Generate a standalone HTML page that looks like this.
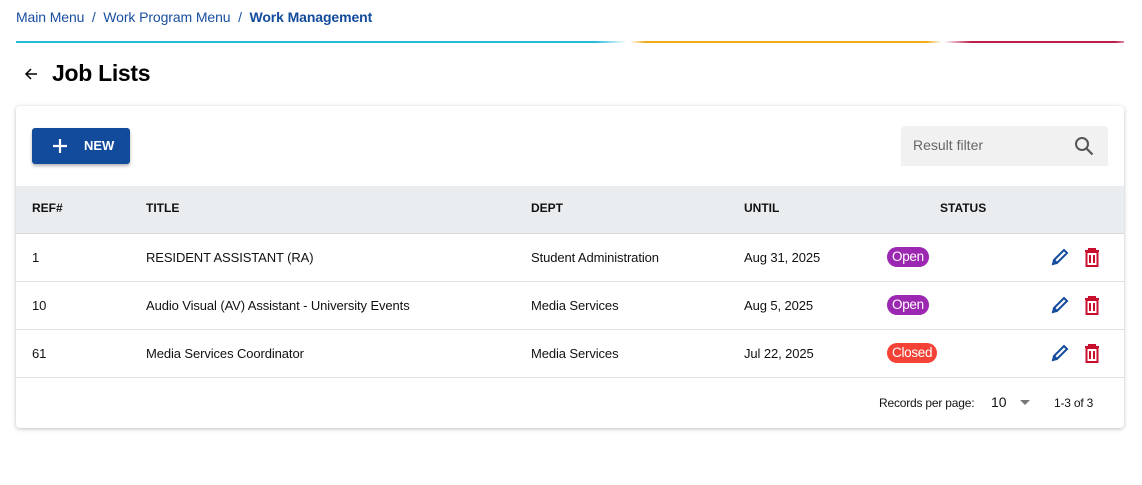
<!DOCTYPE html>
<html><head><style>
*{box-sizing:border-box;margin:0;padding:0}
body{width:1142px;height:485px;background:#fff;font-family:"Liberation Sans",Arial,sans-serif;color:#111;position:relative;overflow:hidden}
.a{position:absolute}
.bc{left:16px;top:9px;font-size:14px;color:#1a4fa0;letter-spacing:-0.1px}
.bc b{color:#124a9c}
.line{top:41px;height:2px}
h1{position:absolute;left:52px;top:60px;font-size:23px;font-weight:bold;color:#000;letter-spacing:-0.3px}
.card{left:16px;top:106px;width:1108px;height:322px;background:#fff;border-radius:4px;box-shadow:0 1px 4px rgba(0,0,0,.25)}
.btn{left:16px;top:22px;width:98px;height:36px;background:#124a9c;border-radius:3px;box-shadow:0 2px 3px rgba(0,0,0,.3);color:#fff;font-size:13px;font-weight:bold}
.search{left:885px;top:20px;width:207px;height:40px;background:#f1f1f1;border-radius:4px 4px 0 0;font-size:14px;color:#666}
.thead{left:0;top:80px;width:1108px;height:48px;background:#eaedf0;border-bottom:1px solid #d8d8d8;font-size:12px;font-weight:bold}
.row{left:0;width:1108px;height:48px;border-bottom:1px solid #e0e0e0;font-size:13px;letter-spacing:-0.1px}
.c{position:absolute;top:50%;transform:translateY(-55%)}
.badge{color:#fff;font-size:13.5px;padding:1px 5px;border-radius:10px;line-height:18px;letter-spacing:-0.3px}
.foot{font-size:12px;letter-spacing:-0.2px}
</style></head><body>
<div class="a bc">Main Menu &nbsp;/&nbsp; Work Program Menu &nbsp;/&nbsp; <b>Work Management</b></div>
<div class="a line" style="left:16px;width:610px;background:linear-gradient(90deg,#26bcd7 95%,#fff)"></div>
<div class="a line" style="left:630px;width:312px;background:linear-gradient(90deg,#fff,#f0ab1c 5%,#f0ab1c 95%,#fff)"></div>
<div class="a line" style="left:944px;width:180px;background:linear-gradient(90deg,#fff,#be1e4a 15%,#be1e4a 95%,#e08aa0)"></div>
<svg class="a" style="left:24px;top:67px" width="14" height="14" viewBox="0 0 14 14"><path d="M13 7H2M7 2L2 7l5 5" stroke="#000" stroke-width="1.5" fill="none"/></svg>
<h1>Job Lists</h1>
<div class="a card">
 <div class="a btn"><svg class="a" style="left:20px;top:10px" width="16" height="16"><path d="M8 1v14M1 8h14" stroke="#fff" stroke-width="2.2"/></svg><span class="a" style="left:52px;top:10px">NEW</span></div>
 <div class="a search"><span class="a" style="left:12px;top:11px">Result filter</span><svg class="a" style="left:172px;top:9px" width="22" height="22" viewBox="0 0 22 22"><circle cx="9" cy="9" r="6" stroke="#555" stroke-width="2" fill="none"/><path d="M13.5 13.5l6 6" stroke="#555" stroke-width="2.2"/></svg></div>
 <div class="a thead"><span class="c" style="left:16px;transform:translateY(-65%)">REF#</span><span class="c" style="left:130px;transform:translateY(-65%)">TITLE</span><span class="c" style="left:515px;transform:translateY(-65%)">DEPT</span><span class="c" style="left:728px;transform:translateY(-65%)">UNTIL</span><span class="c" style="left:924px;transform:translateY(-65%)">STATUS</span></div>
 <div class="a row" style="top:128px"><span class="c" style="left:16px">1</span><span class="c" style="left:130px">RESIDENT ASSISTANT (RA)</span><span class="c" style="left:515px">Student Administration</span><span class="c" style="left:728px">Aug 31, 2025</span><span class="c badge" style="left:871px;background:#9c27b0">Open</span>
 <svg class="c" style="left:1034px" width="20" height="20" viewBox="0 0 20 20"><path d="M3 17l1-4L14 3l3 3L7 16z M4 13l3 3" stroke="#124a9c" stroke-width="2" fill="none"/></svg><svg class="c" style="left:1067px" width="18" height="20" viewBox="0 0 18 20"><path d="M2 4h14M6 4V2h6v2M3.5 5h11v14h-11zM7 8v8M11 8v8" stroke="#c8102e" stroke-width="2" fill="none"/></svg></div>
 <div class="a row" style="top:176px"><span class="c" style="left:16px">10</span><span class="c" style="left:130px">Audio Visual (AV) Assistant - University Events</span><span class="c" style="left:515px">Media Services</span><span class="c" style="left:728px">Aug 5, 2025</span><span class="c badge" style="left:871px;background:#9c27b0">Open</span>
 <svg class="c" style="left:1034px" width="20" height="20" viewBox="0 0 20 20"><path d="M3 17l1-4L14 3l3 3L7 16z M4 13l3 3" stroke="#124a9c" stroke-width="2" fill="none"/></svg><svg class="c" style="left:1067px" width="18" height="20" viewBox="0 0 18 20"><path d="M2 4h14M6 4V2h6v2M3.5 5h11v14h-11zM7 8v8M11 8v8" stroke="#c8102e" stroke-width="2" fill="none"/></svg></div>
 <div class="a row" style="top:224px"><span class="c" style="left:16px">61</span><span class="c" style="left:130px">Media Services Coordinator</span><span class="c" style="left:515px">Media Services</span><span class="c" style="left:728px">Jul 22, 2025</span><span class="c badge" style="left:871px;background:#f44336">Closed</span>
 <svg class="c" style="left:1034px" width="20" height="20" viewBox="0 0 20 20"><path d="M3 17l1-4L14 3l3 3L7 16z M4 13l3 3" stroke="#124a9c" stroke-width="2" fill="none"/></svg><svg class="c" style="left:1067px" width="18" height="20" viewBox="0 0 18 20"><path d="M2 4h14M6 4V2h6v2M3.5 5h11v14h-11zM7 8v8M11 8v8" stroke="#c8102e" stroke-width="2" fill="none"/></svg></div>
 <span class="a foot" style="left:863px;top:290px">Records per page:</span>
 <span class="a" style="left:975px;top:288px;font-size:14px">10</span>
 <svg class="a" style="left:1004px;top:294px" width="10" height="6"><path d="M0 0h10L5 5z" fill="#777"/></svg>
 <span class="a foot" style="left:1038px;top:290px">1-3 of 3</span>
</div>
</body></html>
